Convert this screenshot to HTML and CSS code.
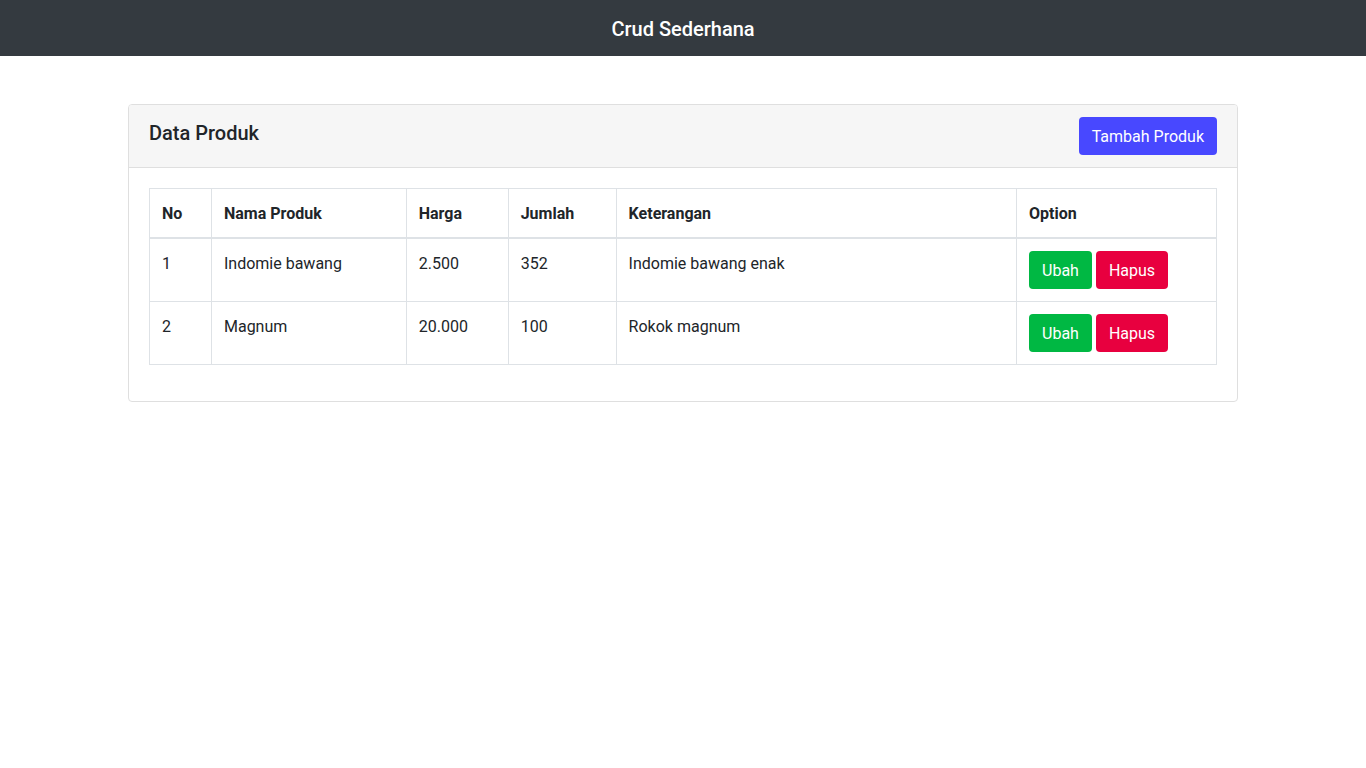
FILE: index.html
```html
<!DOCTYPE html>
<html lang="id">
<head>
<meta charset="utf-8">
<title>Crud Sederhana</title>
<link rel="stylesheet" href="styles.css">
</head>
<body>
<nav class="navbar"><span class="brand">Crud Sederhana</span></nav>
<main class="container">
  <section class="card">
    <header class="card-header">
      <h1 class="card-title">Data Produk</h1>
      <button class="btn btn-blue">Tambah Produk</button>
    </header>
    <div class="card-body">
      <table class="table">
        <thead>
          <tr>
            <th class="c-no">No</th>
            <th class="c-nama">Nama Produk</th>
            <th class="c-harga">Harga</th>
            <th class="c-jumlah">Jumlah</th>
            <th class="c-ket">Keterangan</th>
            <th class="c-opt">Option</th>
          </tr>
        </thead>
        <tbody>
          <tr>
            <td>1</td><td>Indomie bawang</td><td>2.500</td><td>352</td><td>Indomie bawang enak</td>
            <td class="opt"><button class="btn btn-green">Ubah</button><button class="btn btn-red">Hapus</button></td>
          </tr>
          <tr>
            <td>2</td><td>Magnum</td><td>20.000</td><td>100</td><td>Rokok magnum</td>
            <td class="opt"><button class="btn btn-green">Ubah</button><button class="btn btn-red">Hapus</button></td>
          </tr>
        </tbody>
      </table>
    </div>
  </section>
</main>
</body>
</html>
```
FILE: styles.css
```css
* { box-sizing: border-box; }
html, body { margin: 0; padding: 0; }
body {
  font-family: Roboto, "Liberation Sans", sans-serif;
  font-size: 16px;
  line-height: 1.5;
  color: #212529;
  background: #fff;
}
.navbar {
  height: 56px;
  background: #343a40;
  display: flex;
  align-items: center;
  justify-content: center;
  padding-top: 2px;
}
.brand {
  color: #fff;
  font-size: 20px;
  font-weight: 500;
  line-height: 1.2;
}
.container {
  width: 1110px;
  margin: 48px auto 0;
}
.card {
  border: 1px solid #dfdfdf;
  border-radius: 4px;
  background: #fff;
}
.card-header {
  background: #f6f6f6;
  border-bottom: 1px solid #dfdfdf;
  padding: 12px 20px;
  display: flex;
  justify-content: space-between;
  align-items: flex-start;
  border-radius: 3px 3px 0 0;
}
.card-title {
  margin: 0;
  font-size: 20px;
  font-weight: 500;
  line-height: 1.2;
  padding-top: 4px;
}
.btn {
  font-family: inherit;
  font-size: 16px;
  line-height: 24px;
  padding: 8px 13px 6px;
  border: 0;
  border-radius: 4px;
  color: #fff;
  cursor: pointer;
}
.btn-blue { background: #4848ff; }
.btn-green { background: #00b843; }
.btn-red { background: #e8003f; }
.card-body { padding: 20px 20px 36px; }
.table {
  width: 100%;
  border-collapse: collapse;
}
.table th, .table td {
  border: 1px solid #dee2e6;
  padding: 13px 12px 11px;
  text-align: left;
  vertical-align: top;
}
.table th { font-weight: 700; }
.table thead th { border-bottom: 2px solid #dee2e6; }
.c-no { width: 62px; }
.c-nama { width: 195px; }
.c-harga { width: 102px; }
.c-jumlah { width: 108px; }
.c-ket { width: 401px; }
.c-opt { width: 200px; }
.table td.opt { white-space: nowrap; padding: 12px; }
.opt .btn + .btn { margin-left: 4px; }
```
